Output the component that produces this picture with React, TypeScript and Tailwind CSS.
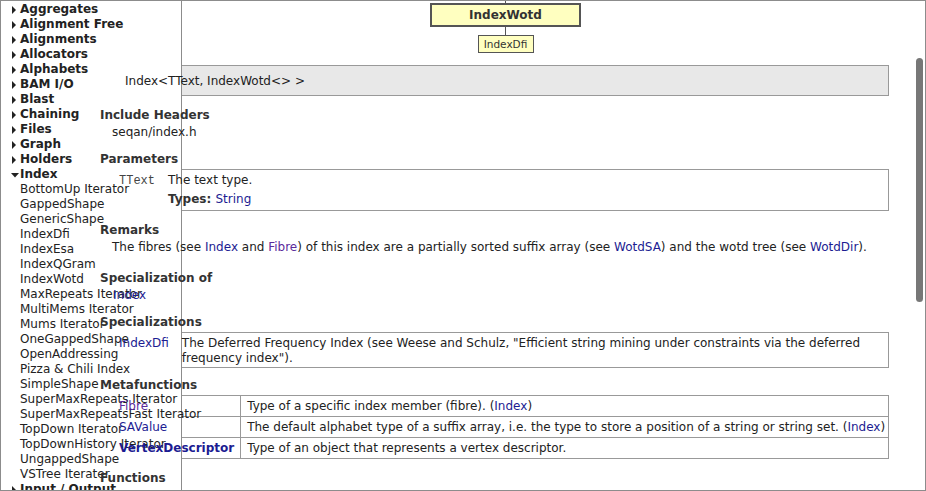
import React from 'react'

const TOP_GROUPS = [
  'Aggregates',
  'Alignment Free',
  'Alignments',
  'Allocators',
  'Alphabets',
  'BAM I/O',
  'Blast',
  'Chaining',
  'Files',
  'Graph',
  'Holders',
]

const INDEX_ITEMS = [
  'BottomUp Iterator',
  'GappedShape',
  'GenericShape',
  'IndexDfi',
  'IndexEsa',
  'IndexQGram',
  'IndexWotd',
  'MaxRepeats Iterator',
  'MultiMems Iterator',
  'Mums Iterator',
  'OneGappedShape',
  'OpenAddressing',
  'Pizza & Chili Index',
  'SimpleShape',
  'SuperMaxRepeats Iterator',
  'SuperMaxRepeatsFast Iterator',
  'TopDown Iterator',
  'TopDownHistory Iterator',
  'UngappedShape',
  'VSTree Iterater',
]

// text is lifted above the nav panel, boxes stay under it
function T({ children, className = '' }: { children: React.ReactNode; className?: string }) {
  return <span className={`relative ${className}`}>{children}</span>
}

function A({ children, visited, bold }: { children: React.ReactNode; visited?: boolean; bold?: boolean }) {
  return (
    <span className={`relative ${visited ? 'text-[#5b2b9c]' : 'text-[#1c1c92]'} ${bold ? 'font-bold' : ''}`}>
      {children}
    </span>
  )
}

function Closed() {
  return (
    <svg width="5" height="8" viewBox="0 0 5 8" className="absolute left-[11px] top-[4px]">
      <polygon points="0,0 4,4 0,8" fill="#222" />
    </svg>
  )
}

function Open() {
  return (
    <svg width="8" height="5" viewBox="0 0 8 5" className="absolute left-[10px] top-[6px]">
      <polygon points="0,0 8,0 4,4.5" fill="#222" />
    </svg>
  )
}

function Group({ name, open }: { name: string; open?: boolean }) {
  return (
    <div className="relative pl-[19px] h-[15px] font-bold text-[#222]">
      {open ? <Open /> : <Closed />}
      {name}
    </div>
  )
}

function Heading({ children, className = '' }: { children: React.ReactNode; className?: string }) {
  return <div className={`relative ml-[99px] font-bold text-[#333] ${className}`}>{children}</div>
}

export default function App() {
  return (
    <div className="relative w-[926px] h-[491px] overflow-hidden bg-white border border-[#8c8c8c] font-['DejaVu_Sans',Verdana,sans-serif] text-[12px] leading-[15px] text-[#222]">
      {/* navigation tree */}
      <div className="absolute left-0 top-0 bottom-0 w-[181px] pt-[1px] bg-white border-r border-[#8c8c8c] whitespace-nowrap">
        {TOP_GROUPS.map((g) => (
          <Group key={g} name={g} />
        ))}
        <Group name="Index" open />
        {INDEX_ITEMS.map((item) => (
          <div key={item} className="pl-[19px] h-[15px] text-[#222]">
            {item}
          </div>
        ))}
        <Group name="Input / Output" />
      </div>

      {/* page */}
      <div className="flex flex-col">
        <div className="ml-[429px] w-[151px] flex flex-col items-center">
          <div className="w-px h-[2px] bg-[#555]" />
          <div className="w-[151px] h-[24px] border-2 border-[#555] bg-[#ffffc0] flex items-center justify-center font-bold text-[#333]">
            IndexWotd
          </div>
          <div className="w-px h-[8px] bg-[#555]" />
          <div className="w-[56px] h-[18px] border border-[#555] bg-[#ffffc0] flex items-center justify-center text-[10.5px] text-[#333]">
            IndexDfi
          </div>
        </div>

        <div className="mt-[12px] ml-[111px] mr-[36px] bg-[#e8e8e8] border border-[#999] pt-[8px] pb-[6px] pl-[12px] text-[#222]">
          <T>Index&lt;TText, IndexWotd&lt;&gt; &gt;</T>
        </div>

        <Heading className="mt-[12px]">Include Headers</Heading>
        <div className="relative ml-[111px] mt-[2px]">seqan/index.h</div>

        <Heading className="mt-[12px]">Parameters</Heading>
        <table className="mt-[2px] ml-[111px] w-[777px] border-collapse">
          <tbody>
            <tr>
              <td className="border border-[#999] align-top px-[6px] pt-[3px] w-px">
                <T className="font-['Liberation_Mono',monospace] text-[12px] text-[#444]">TText</T>
              </td>
              <td className="border border-[#999] align-top px-[6px] pt-[3px] pb-[3px]">
                <div>
                  <T>The text type.</T>
                </div>
                <div className="mt-[4px]">
                  <T className="font-bold text-[#333]">Types: </T>
                  <A>String</A>
                </div>
              </td>
            </tr>
          </tbody>
        </table>

        <Heading className="mt-[12px]">Remarks</Heading>
        <div className="ml-[111px] mt-[2px]">
          <T>The fibres (see </T>
          <A>Index</A>
          <T> and </T>
          <A visited>Fibre</A>
          <T>) of this index are a partially sorted suffix array (see </T>
          <A>WotdSA</A>
          <T>) and the wotd tree (see </T>
          <A>WotdDir</A>
          <T>).</T>
        </div>

        <Heading className="mt-[16px]">Specialization of</Heading>
        <div className="ml-[112px] mt-[2px]">
          <A>Index</A>
        </div>

        <Heading className="mt-[12px]">Specializations</Heading>
        <table className="mt-[2px] ml-[111px] w-[777px] border-collapse">
          <tbody>
            <tr>
              <td className="border border-[#999] align-top px-[6px] pt-[3px] w-px whitespace-nowrap">
                <A>IndexDfi</A>
              </td>
              <td className="border border-[#999] align-top px-[6px] pt-[3px] pb-[1px]">
                <T>
                  The Deferred Frequency Index (see Weese and Schulz, "Efficient string mining under constraints via the deferred
                  frequency index").
                </T>
              </td>
            </tr>
          </tbody>
        </table>

        <Heading className="mt-[10px]">Metafunctions</Heading>
        <table className="mt-[2px] ml-[111px] w-[777px] border-collapse">
          <tbody>
            <tr>
              <td className="border border-[#999] px-[6px] pt-[3px] pb-[2px] w-px whitespace-nowrap">
                <A visited>Fibre</A>
              </td>
              <td className="border border-[#999] px-[6px] pt-[3px] pb-[2px]">
                <T>Type of a specific index member (fibre). (</T>
                <A>Index</A>
                <T>)</T>
              </td>
            </tr>
            <tr>
              <td className="border border-[#999] px-[6px] pt-[3px] pb-[2px] whitespace-nowrap">
                <A>SAValue</A>
              </td>
              <td className="border border-[#999] pl-[6px] pr-0 pt-[3px] pb-[2px] whitespace-nowrap">
                <T>The default alphabet type of a suffix array, i.e. the type to store a position of a string or string set. (</T>
                <A>Index</A>
                <T>)</T>
              </td>
            </tr>
            <tr>
              <td className="border border-[#999] px-[6px] pt-[3px] pb-[2px] whitespace-nowrap">
                <A bold>VertexDescriptor</A>
              </td>
              <td className="border border-[#999] px-[6px] pt-[3px] pb-[2px]">
                <T>Type of an object that represents a vertex descriptor.</T>
              </td>
            </tr>
          </tbody>
        </table>

        <Heading className="mt-[12px]">Functions</Heading>
      </div>

      {/* overlay scrollbar */}
      <div className="absolute right-[2px] top-[57px] w-[7px] h-[244px] rounded-full bg-[#777]" />
    </div>
  )
}
